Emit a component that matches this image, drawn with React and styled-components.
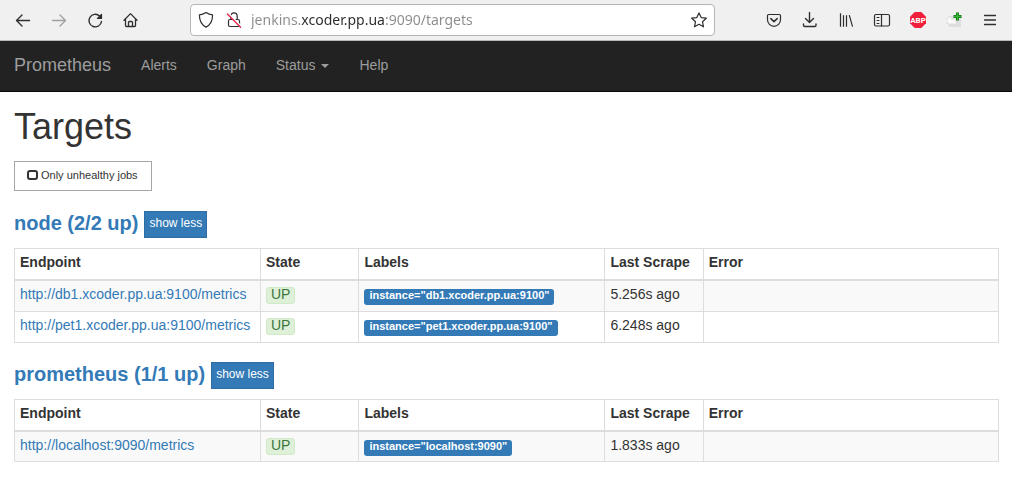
import React, { useState } from "react";
import styled, { createGlobalStyle } from "styled-components";

const GlobalStyle = createGlobalStyle`
  *, *::before, *::after { box-sizing: border-box; }
  body {
    margin: 0;
    background: #fff;
    color: #333;
    font: 14px/20px "Liberation Sans", Arial, sans-serif;
  }
  button, input { font-family: inherit; }
`;

const Toolbar = styled.div`
  display: flex;
  align-items: center;
  gap: 50px;
  height: 41px;
  padding: 0 13px 0 14px;
  background: #f0f0f0;
  border-bottom: 1px solid #b9b9b9;
`;

const IconGroup = styled.div`
  display: flex;
  gap: 18px;
`;

const IconButton = styled.button`
  display: block;
  width: 18px;
  height: 18px;
  padding: 0;
  border: 0;
  background: none;
  color: ${(p) => (p.disabled ? "#a0a0a0" : "#2f2f2f")};

  svg { display: block; width: 18px; height: 18px; }
`;

const AddressBar = styled.div`
  display: flex;
  flex: 1;
  align-items: center;
  height: 32px;
  padding: 0 6px;
  background: #fff;
  border: 1px solid #b5b5b5;
  border-radius: 4px;
`;

const SecurityIcons = styled.div`
  display: flex;
  gap: 10px;
  margin-right: 8px;
`;

const Address = styled.input`
  flex: 1;
  min-width: 0;
  height: 20px;
  padding: 0;
  border: 0;
  outline: 0;
  font: 14px/20px "Noto Sans", "Open Sans", sans-serif;
  color: transparent;
  background: linear-gradient(90deg, #8a8a8a 50px, #2b2b2b 50px, #2b2b2b 133px, #8a8a8a 133px);
  background-clip: text;
  -webkit-background-clip: text;
`;

const Navbar = styled.nav`
  display: flex;
  align-items: center;
  height: 51px;
  padding: 0 14px 3px;
  background: #222;
  border-bottom: 1px solid #080808;
  color: #9d9d9d;
`;

const Brand = styled.a`
  margin-right: 30px;
  font-size: 18px;
  color: inherit;
  text-decoration: none;
`;

const NavItems = styled.div`
  display: flex;
  gap: 30px;
`;

const NavLink = styled.a`
  color: inherit;
  text-decoration: none;
`;

const NavMenu = styled.button`
  display: flex;
  align-items: center;
  gap: 6px;
  padding: 0;
  border: 0;
  background: none;
  font-size: 14px;
  line-height: 20px;
  color: inherit;

  &::after {
    content: "";
    margin-top: 2px;
    border: 4px solid transparent;
    border-top-color: currentColor;
    border-bottom: 0;
  }
`;

const Main = styled.main`
  padding: 15px 13px 20px 14px;
`;

const Title = styled.h1`
  margin: 0 0 14px;
  font-size: 36px;
  line-height: 40px;
  font-weight: 400;
`;

const Filter = styled.label`
  display: flex;
  align-items: center;
  gap: 3px;
  width: max-content;
  height: 30px;
  margin-bottom: 20px;
  padding: 0 13px 2px 12px;
  border: 1px solid #a6a6a6;
  font-size: 11px;
  line-height: 16px;
`;

const FilterBox = styled.input`
  appearance: none;
  width: 11px;
  height: 10px;
  margin: 0;
  border: 2px solid #333;
  border-radius: 3px;

  &:checked { background: #333; }
`;

const Job = styled.section`
  margin-bottom: 19px;
`;

const JobHeader = styled.header`
  display: flex;
  gap: 6px;
  margin-bottom: 10px;
`;

const JobTitle = styled.h2`
  margin: 0;
  font-size: 20px;
  line-height: 24px;
  font-weight: 700;

  a { color: #337ab7; text-decoration: none; }
`;

const Toggle = styled.button`
  height: 27px;
  padding: 0 4px 3px;
  border: 1px solid #2e6da4;
  background: #337ab7;
  color: #fff;
  font-size: 12px;
  line-height: 18px;
`;

const TargetTable = styled.table`
  width: 100%;
  table-layout: fixed;
  border-collapse: collapse;
  border: 1px solid #ddd;

  tbody tr:nth-child(odd) { background: #f9f9f9; }
`;

const HeadCell = styled.th`
  width: ${(p) => p.$width};
  padding: 3px 5px 7px;
  border: 1px solid #ddd;
  border-bottom-width: 2px;
  text-align: left;
`;

const Cell = styled.td`
  height: 31px;
  padding: 3px 5px 5px;
  border: 1px solid #ddd;
  vertical-align: top;

  a { color: #337ab7; text-decoration: none; }
`;

const State = styled.span`
  display: block;
  width: max-content;
  height: 17px;
  margin-top: 3px;
  padding: 0 4px;
  border: 1px solid #d0e9c6;
  border-radius: 3px;
  background: #dff0d8;
  color: #3c763d;
  line-height: 12px;
`;

const Label = styled.span`
  display: block;
  width: max-content;
  height: 16px;
  margin-top: 5px;
  padding: 0 5px;
  border-radius: 3px;
  background: #337ab7;
  color: #fff;
  font-size: 11px;
  line-height: 13px;
  font-weight: 700;
`;

const Icon = ({ children }) => (
  <svg
    viewBox="0 0 18 18"
    width="18"
    height="18"
    fill="none"
    stroke="currentColor"
    strokeWidth="1.2"
    strokeLinecap="round"
    strokeLinejoin="round"
    aria-hidden="true"
  >
    {children}
  </svg>
);

const BackIcon = () => <Icon><path d="M15.5 9.5H2.7M8 4 2.500 9.500 8 15" strokeWidth="1.4" /></Icon>;
const ForwardIcon = () => <Icon><path d="M2.5 9.5h12.800M10 4 15.500 9.500 10 15" strokeWidth="1.4" /></Icon>;
const ReloadIcon = () => (
  <Icon>
    <path d="M13.600 5A6.300 6.300 0 1 0 15.500 10.500" strokeWidth="1.4" />
    <path d="M15.500 3.500v4h-4z" fill="currentColor" />
  </Icon>
);
const HomeIcon = () => (
  <Icon>
    <path d="M2 9.200 8.500 2.600 15 9.200M3.500 8v6.500q0 1 1 1h8q1 0 1-1V8M6.500 15.500v-4q0-1 1-1h2q1 0 1 1v4" strokeWidth="1.3" />
  </Icon>
);
const ShieldIcon = () => (
  <Icon><path d="M9 1.600c2.400 1.700 4.200 2.200 6.600 2.300 0 5.500-1.600 9.500-6.600 12.200C4 13.400 2.400 9.400 2.400 3.900 4.800 3.800 6.600 3.300 9 1.600z" /></Icon>
);
const InsecureIcon = () => (
  <Icon>
    <path d="M5.800 8.500V5a3.200 3.200 0 0 1 6.400 0v3.500" />
    <rect x="3.500" y="8.500" width="11" height="7" rx="1.500" />
    <path d="M3.400 2.400 16.600 15.600" stroke="#fff" strokeWidth="1.500" />
    <path d="M2.400 3 15.600 16.200" stroke="#e22850" strokeWidth="1.400" />
  </Icon>
);
const StarIcon = () => (
  <Icon><path d="m9 1.900 2.200 4.700 5.100.6-3.800 3.500 1 5.100L9 13.300l-4.500 2.500 1-5.100L1.700 7.200l5.100-.6z" /></Icon>
);
const PocketIcon = () => (
  <Icon>
    <path d="M3.700 3.500h10.600q1.200 0 1.200 1.200v4.100a6.500 6.500 0 0 1-13 0V4.700Q2.500 3.500 3.700 3.500z" />
    <path d="m5.800 7.600 3.200 3 3.200-3" strokeWidth="1.500" />
  </Icon>
);
const DownloadIcon = () => (
  <Icon><path d="M8.500 1.500v10M4.500 7.500l4 4 4-4M2.500 13v1.300q0 1.200 1.200 1.200h10.100q1.200 0 1.200-1.200V13" strokeWidth="1.4" /></Icon>
);
const LibraryIcon = () => (
  <Icon><path d="M3.500 2.200v13.500M6.500 4.200v11.500M9.500 4.200v11.500M12.300 4.200 15.500 15.700" strokeLinecap="butt" /></Icon>
);
const SidebarIcon = () => (
  <Icon>
    <rect x="1.500" y="3.500" width="15" height="11.500" rx="1.500" />
    <path d="M8.500 3.500V15" />
    <path d="M4 6.500h2M4 9.500h2M4 12.500h2" strokeWidth="1" />
  </Icon>
);
const AdblockIcon = () => (
  <svg viewBox="0 0 18 18" width="18" height="18" aria-hidden="true">
    <path d="M5.700 1h6.600L17 5.700v6.600L12.300 17H5.700L1 12.300V5.700z" fill="#f01f3c" />
    <text x="9" y="12" fill="#fff" fontSize="8" fontWeight="700" fontFamily="Roboto, sans-serif" textAnchor="middle">
      ABP
    </text>
  </svg>
);
const ExtensionIcon = () => (
  <svg viewBox="0 0 18 18" width="18" height="18" aria-hidden="true">
    <path d="M3 5h8l5 2v9H5l-2-2z" fill="#dedede" />
    <path d="M3 6.500h3v2h4l1 4H3z" fill="#fafafa" />
    <path d="M1 8h2M1 12h2" stroke="#d5d5d5" />
    <path d="M12.500 1.500v8M8.500 5.500h8" stroke="#176e18" strokeWidth="3" />
    <path d="M12.500 2v7M9 5.500h7" stroke="#32b932" strokeWidth="1.500" />
  </svg>
);
const MenuIcon = () => (
  <Icon><path d="M3.500 4.500h11M3.500 9h11M3.500 13.500h11" strokeWidth="1.3" /></Icon>
);

const jobs = [
  {
    name: "node",
    summary: "2/2 up",
    targets: [
      { host: "db1.xcoder.pp.ua:9100", scrape: "5.256s ago" },
      { host: "pet1.xcoder.pp.ua:9100", scrape: "6.248s ago" },
    ],
  },
  {
    name: "prometheus",
    summary: "1/1 up",
    targets: [{ host: "localhost:9090", scrape: "1.833s ago" }],
  },
];

function JobSection({ job }) {
  const [open, setOpen] = useState(true);
  return (
    <Job>
      <JobHeader>
        <JobTitle><a href={`#job-${job.name}`}>{`${job.name} (${job.summary})`}</a></JobTitle>
        <Toggle type="button" aria-expanded={open} onClick={() => setOpen(!open)}>
          {open ? "show less" : "show more"}
        </Toggle>
      </JobHeader>
      {open && (
        <TargetTable>
          <thead>
            <tr>
              <HeadCell $width="25%">Endpoint</HeadCell>
              <HeadCell $width="10%">State</HeadCell>
              <HeadCell $width="25%">Labels</HeadCell>
              <HeadCell $width="10%">Last Scrape</HeadCell>
              <HeadCell $width="30%">Error</HeadCell>
            </tr>
          </thead>
          <tbody>
            {job.targets.map((t) => (
              <tr key={t.host}>
                <Cell><a href={`http://${t.host}/metrics`}>{`http://${t.host}/metrics`}</a></Cell>
                <Cell><State>UP</State></Cell>
                <Cell><Label>{`instance="${t.host}"`}</Label></Cell>
                <Cell>{t.scrape}</Cell>
                <Cell />
              </tr>
            ))}
          </tbody>
        </TargetTable>
      )}
    </Job>
  );
}

export default function App() {
  return (
    <>
      <GlobalStyle />
      <Toolbar>
        <IconGroup>
          <IconButton aria-label="Back"><BackIcon /></IconButton>
          <IconButton aria-label="Forward" disabled><ForwardIcon /></IconButton>
          <IconButton aria-label="Reload"><ReloadIcon /></IconButton>
          <IconButton aria-label="Home"><HomeIcon /></IconButton>
        </IconGroup>
        <AddressBar>
          <SecurityIcons>
            <IconButton aria-label="Tracking protection"><ShieldIcon /></IconButton>
            <IconButton aria-label="Connection not secure"><InsecureIcon /></IconButton>
          </SecurityIcons>
          <Address aria-label="Address" defaultValue="jenkins.xcoder.pp.ua:9090/targets" spellCheck={false} />
          <IconButton aria-label="Bookmark this page"><StarIcon /></IconButton>
        </AddressBar>
        <IconGroup>
          <IconButton aria-label="Save to Pocket"><PocketIcon /></IconButton>
          <IconButton aria-label="Downloads"><DownloadIcon /></IconButton>
          <IconButton aria-label="Library"><LibraryIcon /></IconButton>
          <IconButton aria-label="Sidebars"><SidebarIcon /></IconButton>
          <IconButton aria-label="Adblock Plus"><AdblockIcon /></IconButton>
          <IconButton aria-label="Extension"><ExtensionIcon /></IconButton>
          <IconButton aria-label="Menu"><MenuIcon /></IconButton>
        </IconGroup>
      </Toolbar>
      <Navbar>
        <Brand href="#prometheus">Prometheus</Brand>
        <NavItems>
          <NavLink href="#alerts">Alerts</NavLink>
          <NavLink href="#graph">Graph</NavLink>
          <NavMenu type="button">Status</NavMenu>
          <NavLink href="#help">Help</NavLink>
        </NavItems>
      </Navbar>
      <Main>
        <Title>Targets</Title>
        <Filter>
          <FilterBox type="checkbox" />
          Only unhealthy jobs
        </Filter>
        {jobs.map((job) => <JobSection key={job.name} job={job} />)}
      </Main>
    </>
  );
}
